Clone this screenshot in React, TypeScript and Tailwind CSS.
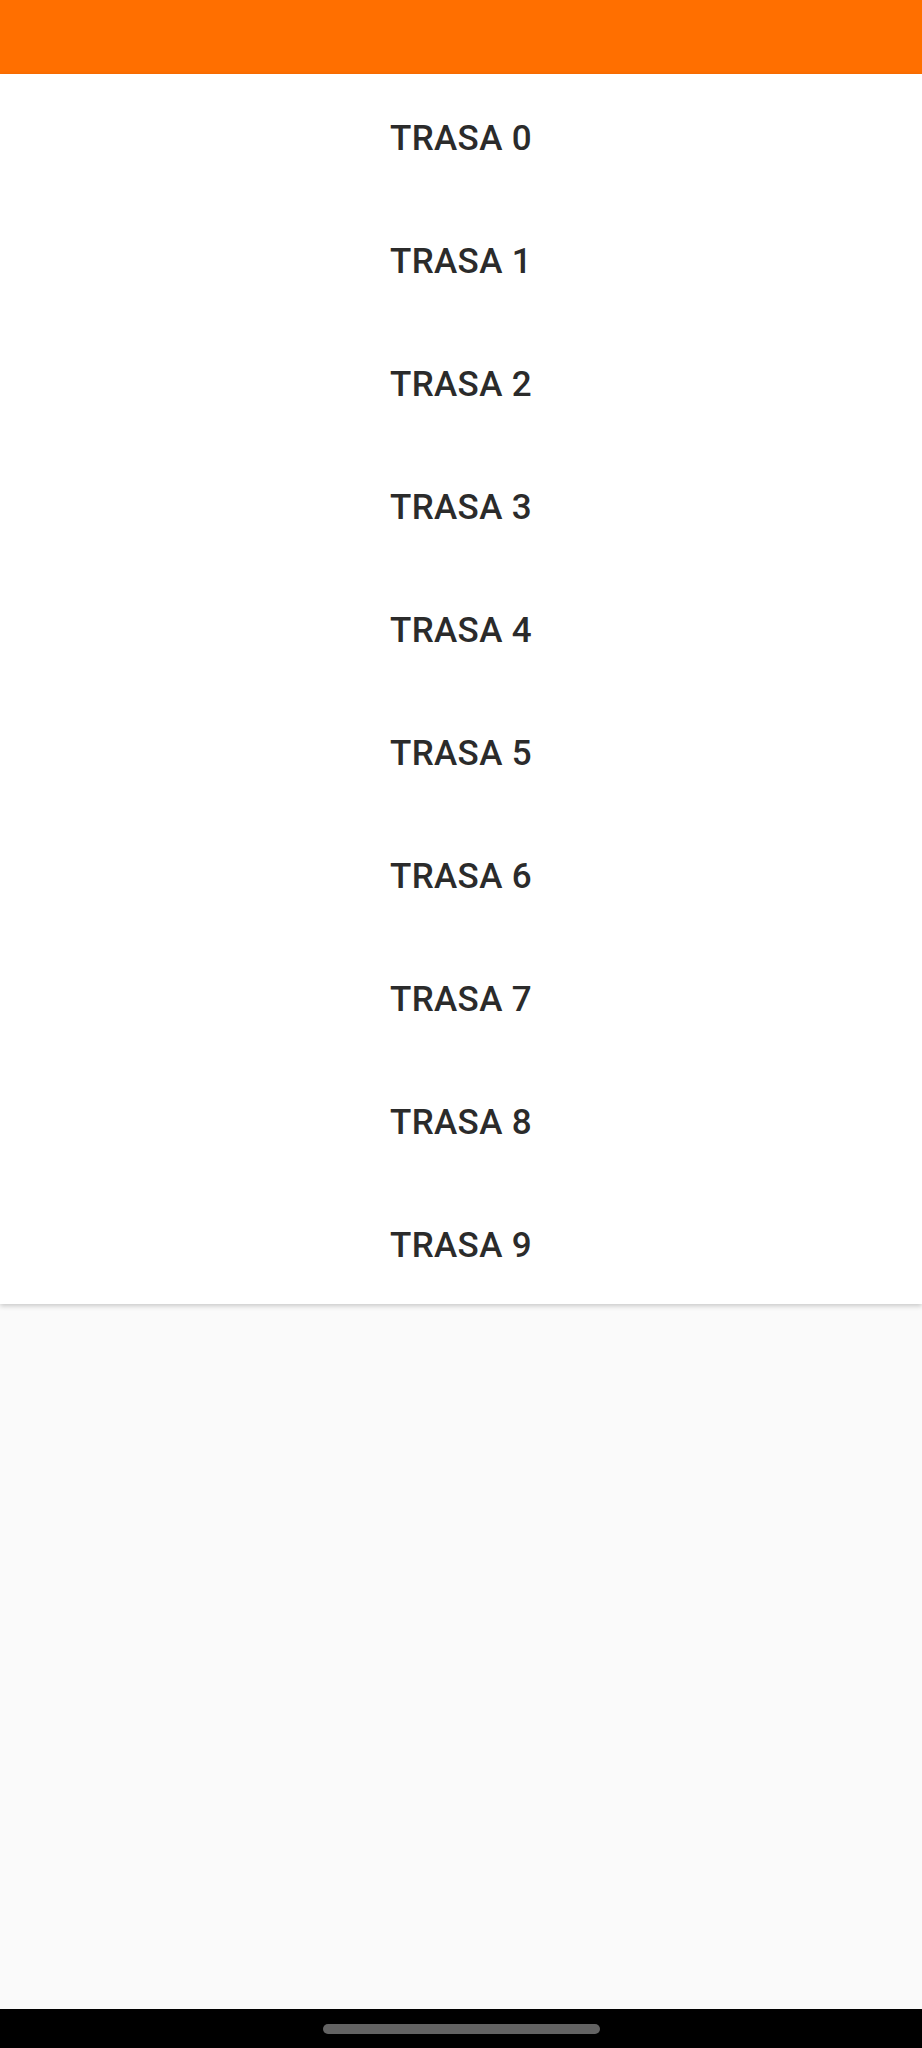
const ROUTES = Array.from({ length: 10 }, (_, i) => `TRASA ${i}`);

export default function App() {
  return (
    <div className="flex h-[2048px] w-full flex-col bg-[#fafafa] font-['Roboto',sans-serif]">
      {/* Status / app bar */}
      <div className="h-[74px] shrink-0 bg-[#ff6f00]" />

      {/* Route list */}
      <div className="relative z-10 shrink-0 bg-white shadow-[0_2px_5px_rgba(0,0,0,0.2)]">
        {ROUTES.map((route) => (
          <div
            key={route}
            className="flex h-[123px] items-center justify-center pt-2 text-[35px] font-medium tracking-[0.01em] text-[#2b2b2b]"
          >
            {route}
          </div>
        ))}
      </div>

      <div className="flex-1" />

      {/* Navigation bar */}
      <div className="flex h-[39px] shrink-0 items-start justify-center bg-black pt-[15px]">
        <div className="h-[10px] w-[277px] rounded-full bg-[#636363]" />
      </div>
    </div>
  );
}
